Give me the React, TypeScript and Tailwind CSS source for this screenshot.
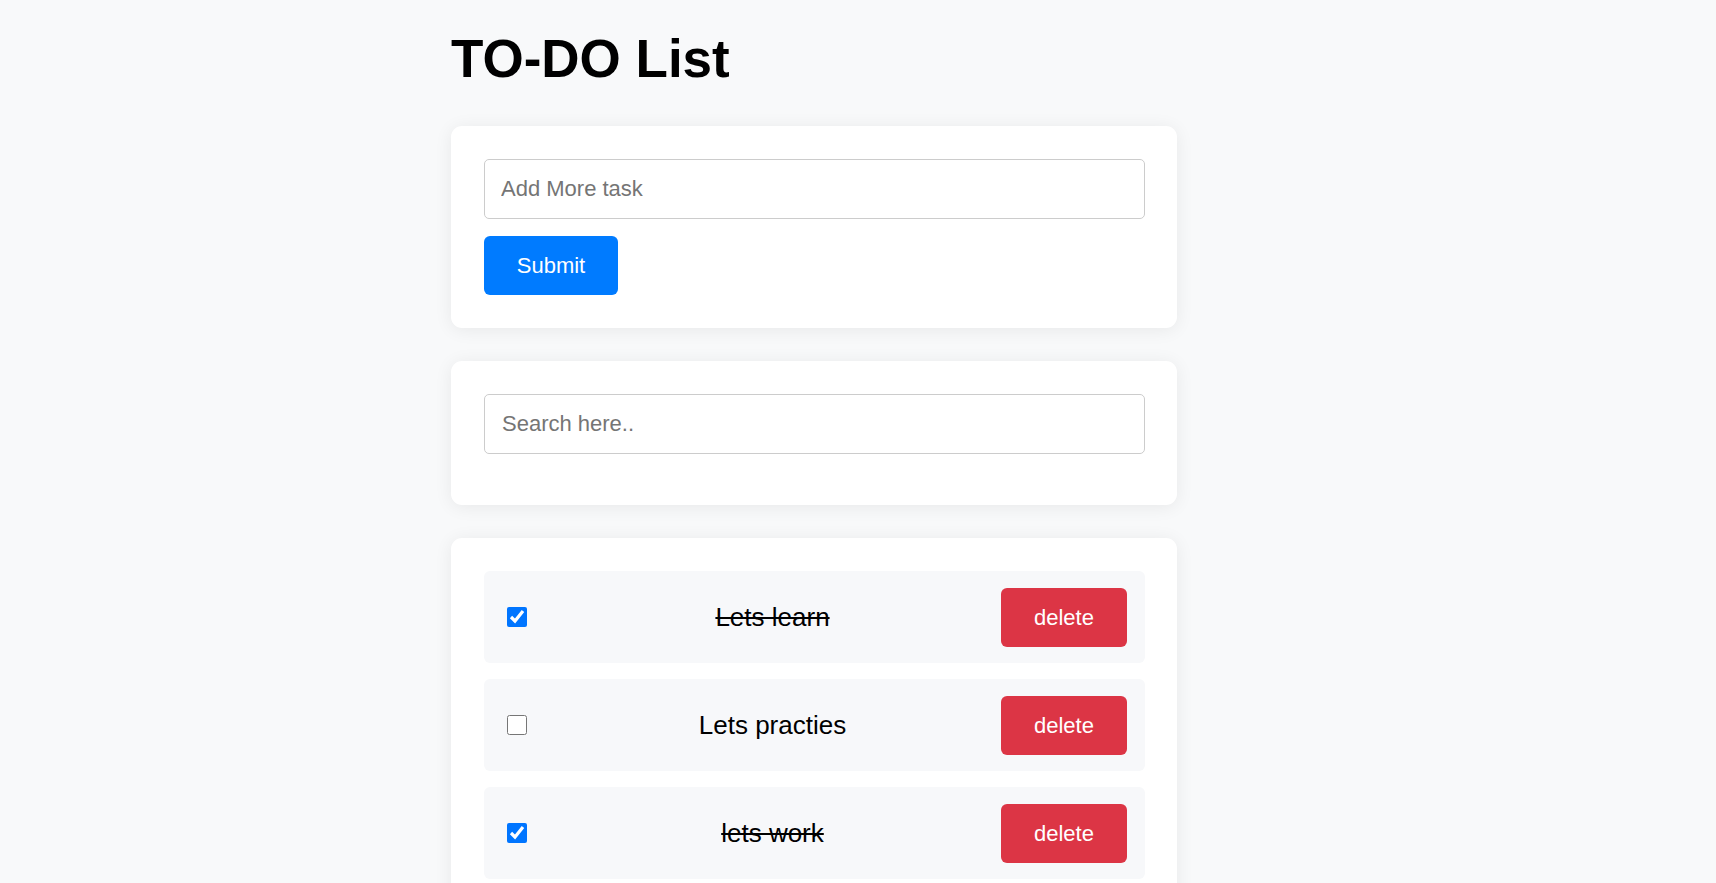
import { useState } from "react";

type Task = { id: number; text: string; done: boolean };

const initialTasks: Task[] = [
  { id: 1, text: "Lets learn", done: true },
  { id: 2, text: "Lets practies", done: false },
  { id: 3, text: "lets work", done: true },
];

function App() {
  const [tasks, setTasks] = useState<Task[]>(initialTasks);
  const [newTask, setNewTask] = useState("");
  const [search, setSearch] = useState("");

  const handleSubmit = () => {
    if (!newTask.trim()) return;
    setTasks([...tasks, { id: Date.now(), text: newTask, done: false }]);
    setNewTask("");
  };

  const toggleTask = (id: number) => setTasks(tasks.map((t) => (t.id === id ? { ...t, done: !t.done } : t)));

  const deleteTask = (id: number) => setTasks(tasks.filter((t) => t.id !== id));

  const renderTask = (item: Task) => (
    <div key={item.id} className="flex items-center h-[92px] pl-[18px] pr-[18px] bg-[#f7f8fa] rounded-[6px]">
      <input
        type="checkbox"
        checked={item.done}
        onChange={() => toggleTask(item.id)}
        className="w-[20px] h-[20px] ml-[5px] mr-[17px] m-0 shrink-0"
      />
      <span className={`flex-1 text-center text-[26px] text-black ${item.done ? "line-through" : ""}`}>{item.text}</span>
      <button
        onClick={() => deleteTask(item.id)}
        className="w-[126px] h-[59px] bg-[#dc3545] text-white text-[22px] rounded-[6px]"
      >
        delete
      </button>
    </div>
  );

  const cardClass = "bg-white rounded-[11px] pl-[33px] pr-[32px] shadow-[0_2px_18px_rgba(0,0,0,0.07)]";

  return (
    <div className="min-h-screen bg-[#f8f9fa] font-['Liberation_Sans',Arial,sans-serif]">
      <div className="ml-[451px] w-[726px] pt-[32px]">
        <h1 className="text-[53px] font-bold leading-none text-black mb-[41px]">TO-DO List</h1>

        <div className={`${cardClass} pt-[33px] pb-[33px]`}>
          <input
            value={newTask}
            onChange={(e) => setNewTask(e.target.value)}
            placeholder="Add More task"
            className="block w-full h-[60px] border border-[#cccccc] rounded-[5px] px-[16px] text-[22px] text-black placeholder:text-[#757575] outline-none"
          />
          <button
            onClick={handleSubmit}
            className="mt-[17px] w-[134px] h-[59px] bg-[#007bff] text-white text-[22px] rounded-[6px]"
          >
            Submit
          </button>
        </div>

        <div className={`${cardClass} mt-[33px] pt-[33px] pb-[51px]`}>
          <input
            value={search}
            onChange={(e) => setSearch(e.target.value)}
            placeholder="Search here.."
            className="block w-full h-[60px] border border-[#cccccc] rounded-[5px] px-[17px] text-[22px] text-black placeholder:text-[#757575] outline-none"
          />
        </div>

        <div className={`${cardClass} mt-[33px] pt-[33px] pb-[33px] flex flex-col gap-[16px]`}>
          {tasks.filter((t) => t.text.toLowerCase().includes(search.toLowerCase())).map(renderTask)}
        </div>
      </div>
    </div>
  );
}

export default App;
